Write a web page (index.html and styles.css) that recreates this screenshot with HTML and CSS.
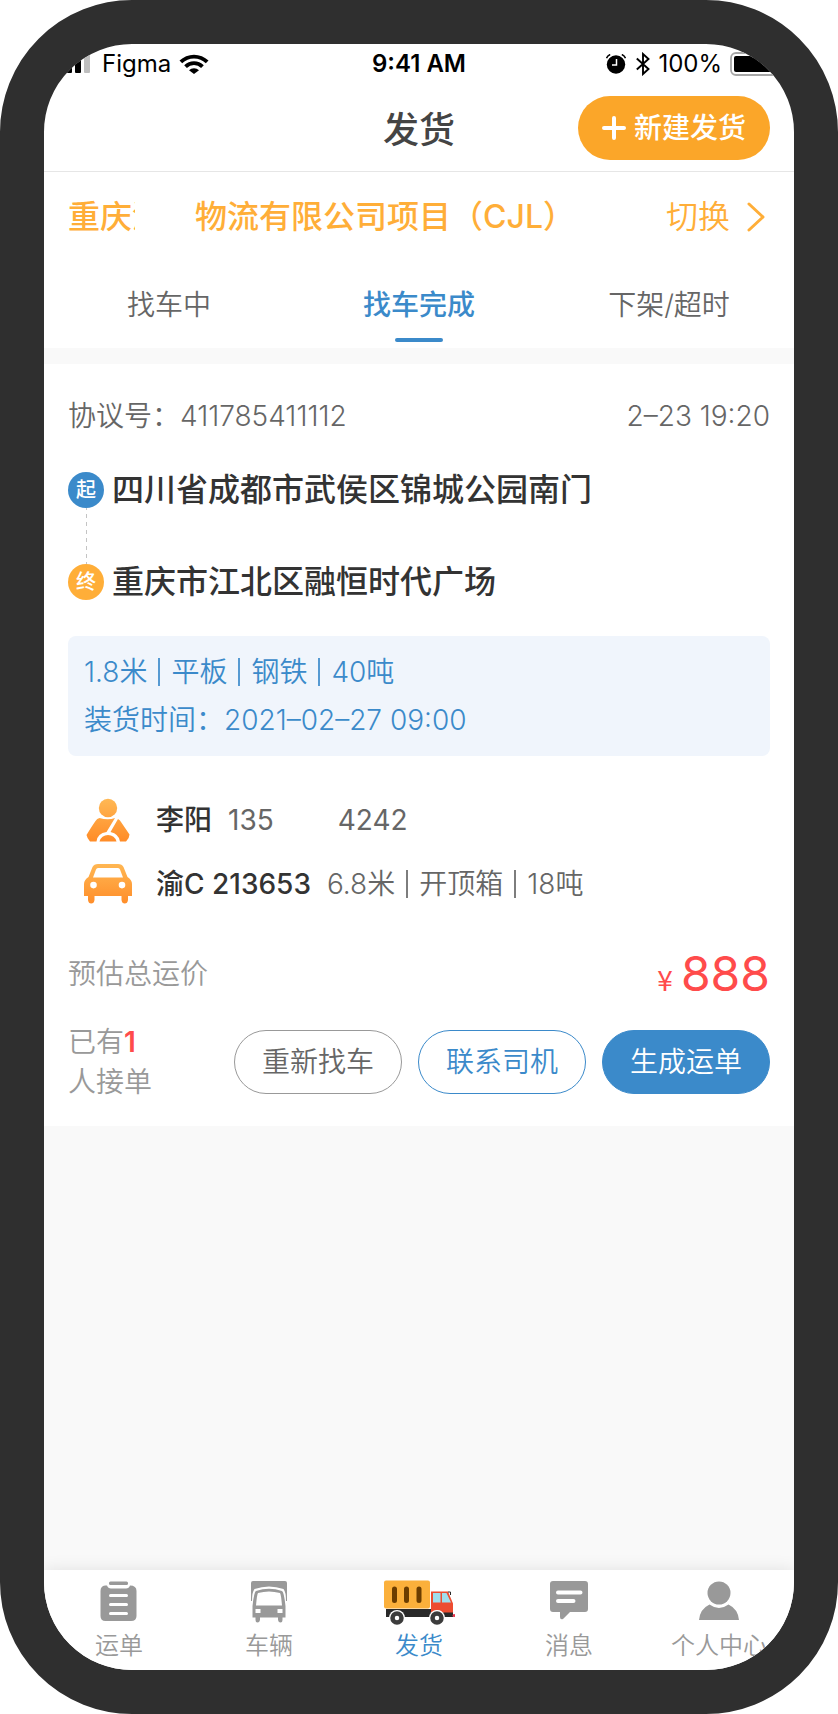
FILE: index.html
```html
<!DOCTYPE html>
<html lang="zh-CN">
<head>
<meta charset="utf-8">
<meta name="viewport" content="width=device-width, initial-scale=1">
<title>发货</title>
<link rel="stylesheet" href="styles.css">
</head>
<body>
<div class="phone">
  <div class="status">
    <div class="status-left">
      <svg class="signal" width="34" height="20" viewBox="0 0 34 20"><rect x="1" y="12" width="6" height="7" rx="1"/><rect x="10" y="9" width="6" height="10" rx="1"/><rect x="19" y="5" width="6" height="14" rx="1"/><rect x="28" y="0" width="6" height="19" rx="1" fill="#bfbfbf"/></svg>
      <span>Figma</span>
      <svg width="30" height="20" viewBox="0 0 30 20"><path d="M0.5 6.6A20.6 20.6 0 0 1 29.5 6.6L26.8 9.3A16.8 16.8 0 0 0 3.2 9.3Z"/><path d="M5.2 11.3A13.9 13.9 0 0 1 24.8 11.3L22.1 14A10.1 10.1 0 0 0 7.900 14Z"/><path d="M10 16.200A7.100 7.100 0 0 1 20 16.200L15 20Z"/></svg>
    </div>
    <div class="status-time">9:41 AM</div>
    <div class="status-right">
      <svg class="alarm" width="20" height="20" viewBox="0 0 20 20"><circle cx="10" cy="10.500" r="9.200"/><path d="M.8 4.200Q1.500 1.500 4.200.8M15.800.8Q18.500 1.500 19.200 4.200" fill="none" stroke="#fff" stroke-width="4"/><path d="M.5 4.200Q1.500 1.500 4.200.5M15.800.5Q18.500 1.500 19.500 4.200" fill="none" stroke="#000" stroke-width="1.500"/><path d="M10.500 5V11H6" fill="none" stroke="#fff" stroke-width="1.500"/></svg>
      <svg width="14" height="24" viewBox="0 0 14 24"><path d="M.8 6.500L12.500 17L7 22V2L12.500 7L.8 17.500" fill="none" stroke="#000" stroke-width="1.900"/></svg>
      <span class="charge">100%</span>
      <svg class="battery" width="52" height="24" viewBox="0 0 52 24"><rect x="1" y="1" width="46" height="22" rx="5" fill="none" stroke="#a6a6a6" stroke-width="1.800"/><rect x="4" y="4" width="40" height="16" rx="2"/><path d="M49 8Q52 12 49 16Z" fill="#a6a6a6"/></svg>
    </div>
  </div>

  <header class="header">
    <h1 class="title">发货</h1>
    <button class="create" type="button">
      <svg width="24" height="24" viewBox="0 0 24 24"><path d="M12 2V22M2 12H22" stroke="#fff" stroke-width="4" stroke-linecap="round"/></svg>
      新建发货
    </button>
  </header>

  <div class="project">
    <div class="project-name"><span>重庆</span><span class="sliver">港</span><span class="company">物流有限公司项目（CJL）</span></div>
    <button class="switch" type="button">切换
      <svg width="20" height="32" viewBox="0 0 20 32"><path d="M3 3L17 16L3 29" fill="none" stroke="#ffae38" stroke-width="3" stroke-linecap="round" stroke-linejoin="round"/></svg>
    </button>
  </div>

  <nav class="tabs">
    <button class="tab" type="button">找车中</button>
    <button class="tab tab-active" type="button">找车完成</button>
    <button class="tab" type="button">下架/超时</button>
  </nav>

  <main class="content">
    <article class="card">
      <div class="row meta"><span>协议号：411785411112</span><span>2–23 19:20</span></div>
      <div class="route">
        <div class="stop"><span class="dot">起</span><span>四川省成都市武侯区锦城公园南门</span></div>
        <svg class="link" width="36" height="56" viewBox="0 0 36 56"><path d="M18.500 0V56" stroke="#c4c4c4" stroke-dasharray="4 4" stroke-dashoffset="2"/></svg>
        <div class="stop"><span class="dot dot-end">终</span><span>重庆市江北区融恒时代广场</span></div>
      </div>
      <div class="cargo">
        <div class="specs"><span>1.8米</span><i class="bar"></i><span>平板</span><i class="bar"></i><span>钢铁</span><i class="bar"></i><span>40吨</span></div>
        <div>装货时间：2021–02–27 09:00</div>
      </div>
      <div class="carrier">
        <div class="carrier-row">
          <svg width="48" height="44" viewBox="0 0 48 44"><defs><linearGradient id="warm" x1="0" y1="0" x2="0" y2="44" gradientUnits="userSpaceOnUse"><stop stop-color="#ffb955"/><stop offset="1" stop-color="#ff8b27"/></linearGradient></defs><g fill="url(#warm)"><circle cx="24" cy="10" r="9.200"/><path d="M15.500 20Q24 22.500 31 20L22.500 34Q13.500 35 12.500 43.500H6Q3 40 2.500 37Q8 28 11.500 23Q13 20.500 15.500 20Z"/><path d="M34 21Q36 22 37 24L45.500 36.500Q45.500 40 42 43.500H36Q35 36 26.500 34Z"/><path d="M15.500 43.500A8.700 8.300 0 0 1 32.500 43.500Z"/></g></svg>
          <strong>李阳</strong><span class="phone-number"><span>135</span><span>4242</span></span>
        </div>
        <div class="carrier-row">
          <svg width="48" height="44" viewBox="0 0 48 44"><path fill="url(#warm)" fill-rule="evenodd" d="M14 2H34Q38 2 39.500 5L43.500 15Q48 18 48 22V34H44V38Q43.500 41.500 40.800 41.500Q38 41.500 37.500 38V34H10.500V38Q10 41.500 7.200 41.500Q4.500 41.500 4 38V34H0V22Q0 18 4.500 15L8.500 5Q10 2 14 2ZM14 6Q12.500 6 12 7.500L9 15.500H39L36 7.500Q35.500 6 34 6ZM9.500 19.800A3.300 3.300 0 1 0 9.500 26.400A3.300 3.300 0 1 0 9.500 19.800ZM38 19.800A3.300 3.300 0 1 0 38 26.400A3.300 3.300 0 1 0 38 19.800Z"/></svg>
          <strong>渝C 213653</strong><span class="specs"><span>6.8米</span><i class="bar"></i><span>开顶箱</span><i class="bar"></i><span>18吨</span></span>
        </div>
      </div>
      <div class="row price"><span>预估总运价</span><span class="amount"><small class="yen">¥</small>888</span></div>
      <div class="row actions">
        <p class="taken">已有<b class="count">1</b><br>人接单</p>
        <div class="buttons">
          <button class="btn" type="button">重新找车</button>
          <button class="btn btn-blue" type="button">联系司机</button>
          <button class="btn btn-solid" type="button">生成运单</button>
        </div>
      </div>
    </article>
  </main>

  <nav class="dock">
    <a class="dock-item" href="#"><svg width="72" height="48" viewBox="0 0 72 48"><g fill="#999"><rect x="26" y="3.500" width="19" height="3.500" rx="1.500"/><path d="M22 7.500H24Q25 10.500 28 10.500H43Q46 10.500 47 7.500Q53.500 7.500 53.500 13V38Q53.500 43 48 43H22.500Q17.500 43 17.500 38V13Q17.500 8 22 7.500Z"/></g><path d="M27.500 17.500H43.500M27.500 26.500H43.500M27.500 35.500H43.500" stroke="#fff" stroke-width="3" stroke-linecap="round"/></svg>运单</a>
    <a class="dock-item" href="#"><svg width="72" height="48" viewBox="0 0 72 48"><path fill="#999" d="M18 5Q18 3 20 3H52Q54 3 54 5V23H53Q53 14 50.500 11Q36 6 21.500 11Q19 14 19 23H18Z"/><path fill="#999" fill-rule="evenodd" d="M23 13Q36 8.500 49 13Q51 14 52.500 28V39.500H49.500V42Q49.500 44.500 47.500 44.500Q45.500 44.500 45 42V39.500H27V42Q26.500 44.500 24.500 44.500Q22.500 44.500 22.500 42V39.500H19.500V28Q21 14 23 13ZM25 15Q24 16 23 27.500H49Q48 16 47 15Q36 12 25 15ZM22.500 31V35H27.500V31ZM44.500 31V35H49.500V31Z"/></svg>车辆</a>
    <a class="dock-item dock-active" href="#"><svg width="72" height="48" viewBox="0 0 72 48"><rect x="1" y="2.500" width="46" height="28" rx="2" fill="#fbb03b"/><path d="M11.500 11V22.500M23.500 11V22.500M36 11V22.500" stroke="#6b3d00" stroke-width="5" stroke-linecap="round"/><path d="M3 31H48V34H70V39H3Z" fill="#292929"/><path d="M48 13.500H65L70 25.500V34.500H60Q54 30 48 35Z" fill="#ed4c31"/><path d="M50 15H57.500V24.500H50ZM59 15H63.500L68 24.500H59Z" fill="#a0deed"/><path d="M65 14H67.500V17" fill="none" stroke="#292929"/><circle cx="71" cy="37.500" r="1.500" fill="#e63249"/><circle cx="14" cy="40" r="8" fill="#fff"/><circle cx="54" cy="40" r="8" fill="#fff"/><circle cx="14" cy="40" r="4.500" fill="#fff" stroke="#3c3c3c" stroke-width="4.500"/><circle cx="54" cy="40" r="4.500" fill="#fff" stroke="#3c3c3c" stroke-width="4.500"/></svg>发货</a>
    <a class="dock-item" href="#"><svg width="72" height="48" viewBox="0 0 72 48"><path fill="#999" d="M20 3H52Q55 3 55 6V31Q55 34 52 34H37L30 41Q27 42 27 39V34H20Q17 34 17 31V6Q17 3 20 3Z"/><path d="M25 14.500H47.500M25 23H40.500" stroke="#fff" stroke-width="4" stroke-linecap="round"/></svg>消息</a>
    <a class="dock-item" href="#"><svg width="72" height="48" viewBox="0 0 72 48"><g fill="#999"><circle cx="36" cy="15" r="11.500"/><path d="M26.500 26.500Q36 33.500 45.500 26.500Q55 31 56 42H16Q17 31 26.500 26.500Z"/></g></svg>个人中心</a>
  </nav>
</div>
</body>
</html>
```
FILE: styles.css
```css
* { box-sizing: border-box; }

body {
  margin: 0;
  background: #fff;
  font-family: Inter, "Noto Sans CJK SC", sans-serif;
  font-size: 28px;
  font-weight: 350;
  line-height: 40px;
  color: #666;
}

svg { display: block; flex: none; }
button { font: inherit; color: inherit; background: none; border: 0; padding: 0; cursor: pointer; }
a { color: inherit; text-decoration: none; }

.phone {
  display: flex;
  flex-direction: column;
  min-height: 100vh;
  border: 44px solid #2f2f2f;
  border-radius: 132px;
  overflow: hidden;
  background: #fff;
}

.status {
  display: grid;
  grid-template-columns: 1fr auto 1fr;
  align-items: center;
  height: 40px;
  padding: 0 12px;
  font-size: 24px;
  font-weight: 400;
  color: #000;
}
.status-left, .status-right { display: flex; align-items: center; gap: 8px; }
.signal { margin-right: 4px; }
.alarm { margin-right: 2px; }
.status-right { justify-content: flex-end; }
.status-time { font-weight: 600; }

.header {
  display: grid;
  grid-template-columns: 1fr auto 1fr;
  align-items: center;
  height: 88px;
  padding: 0 24px;
  border-bottom: 1px solid #e6e6e6;
}
.title { grid-column: 2; margin: 0; padding-top: 4px; font-size: 36px; font-weight: 500; color: #444; }
.create {
  display: flex;
  align-items: center;
  justify-content: center;
  justify-self: end;
  gap: 8px;
  height: 64px;
  padding: 0 24px;
  border-radius: 32px;
  background: #fba629;
  color: #fff;
  font-weight: 500;
}

.project {
  display: flex;
  align-items: center;
  justify-content: space-between;
  height: 90px;
  padding: 0 24px;
  font-size: 32px;
  color: #ffae38;
}
.project-name { display: flex; font-weight: 500; }
.sliver { width: 3px; overflow: hidden; }
.company { margin-left: 60px; }
.switch { display: flex; align-items: center; gap: 16px; padding-right: 4px; }

.tabs { display: flex; height: 86px; }
.tab { flex: 1; position: relative; }
.tab-active { color: #3b8aca; font-weight: 500; }
.tab-active::after {
  content: "";
  position: absolute;
  left: 50%;
  bottom: 6px;
  width: 48px;
  height: 4px;
  margin-left: -24px;
  border-radius: 2px;
  background: #3b8aca;
}

.content { flex: 1; padding-top: 16px; background: #f9f9f9; }
.card { padding: 32px 24px 24px; background: #fff; }
.row { display: flex; align-items: center; justify-content: space-between; }

.route { margin: 36px 0; font-size: 32px; font-weight: 500; color: #333; }
.stop { display: flex; align-items: center; gap: 8px; height: 36px; }
.dot {
  width: 36px;
  height: 36px;
  border-radius: 50%;
  background: #3b8aca;
  color: #fff;
  font-size: 20px;
  line-height: 36px;
  text-align: center;
}
.dot-end { background: #ffae38; }

.cargo {
  display: flex;
  flex-direction: column;
  gap: 8px;
  padding: 16px;
  border-radius: 8px;
  background: #f0f5fc;
  color: #3b8aca;
}
.specs { display: flex; align-items: center; gap: 11px; }
.bar { width: 2px; height: 28px; background: currentColor; opacity: 0.85; }

.carrier { display: flex; flex-direction: column; gap: 20px; margin: 42px 16px 0; }
.carrier-row { display: flex; align-items: center; height: 44px; }
.carrier-row strong { margin: 0 16px 0 24px; font-weight: 500; color: #333; }
.phone-number { display: flex; gap: 64px; font-weight: 400; }

.price { height: 56px; margin-top: 40px; color: #999; }
.amount { padding-top: 4px; font-size: 48px; font-weight: 400; color: #ff4b4b; }
.yen { margin-right: 8px; font-family: "Noto Sans CJK SC", sans-serif; font-size: 28px; }

.actions { margin-top: 20px; }
.taken { margin: 0; color: #999; }
.count { font-weight: 600; color: #ff4b4b; }
.buttons { display: flex; gap: 16px; }
.btn { width: 168px; height: 64px; border: 1px solid #999; border-radius: 32px; }
.btn-blue { border-color: #3b8aca; color: #3b8aca; }
.btn-solid { border-color: #3b8aca; background: #3b8aca; color: #fff; }

.dock {
  display: flex;
  height: 100px;
  background: #fff;
  box-shadow: 0 0 16px rgba(0, 0, 0, 0.1);
}
.dock-item {
  display: flex;
  flex: 1;
  flex-direction: column;
  align-items: center;
  padding-top: 8px;
  font-size: 24px;
  color: #999;
}
.dock-active { color: #3b8aca; }
```
